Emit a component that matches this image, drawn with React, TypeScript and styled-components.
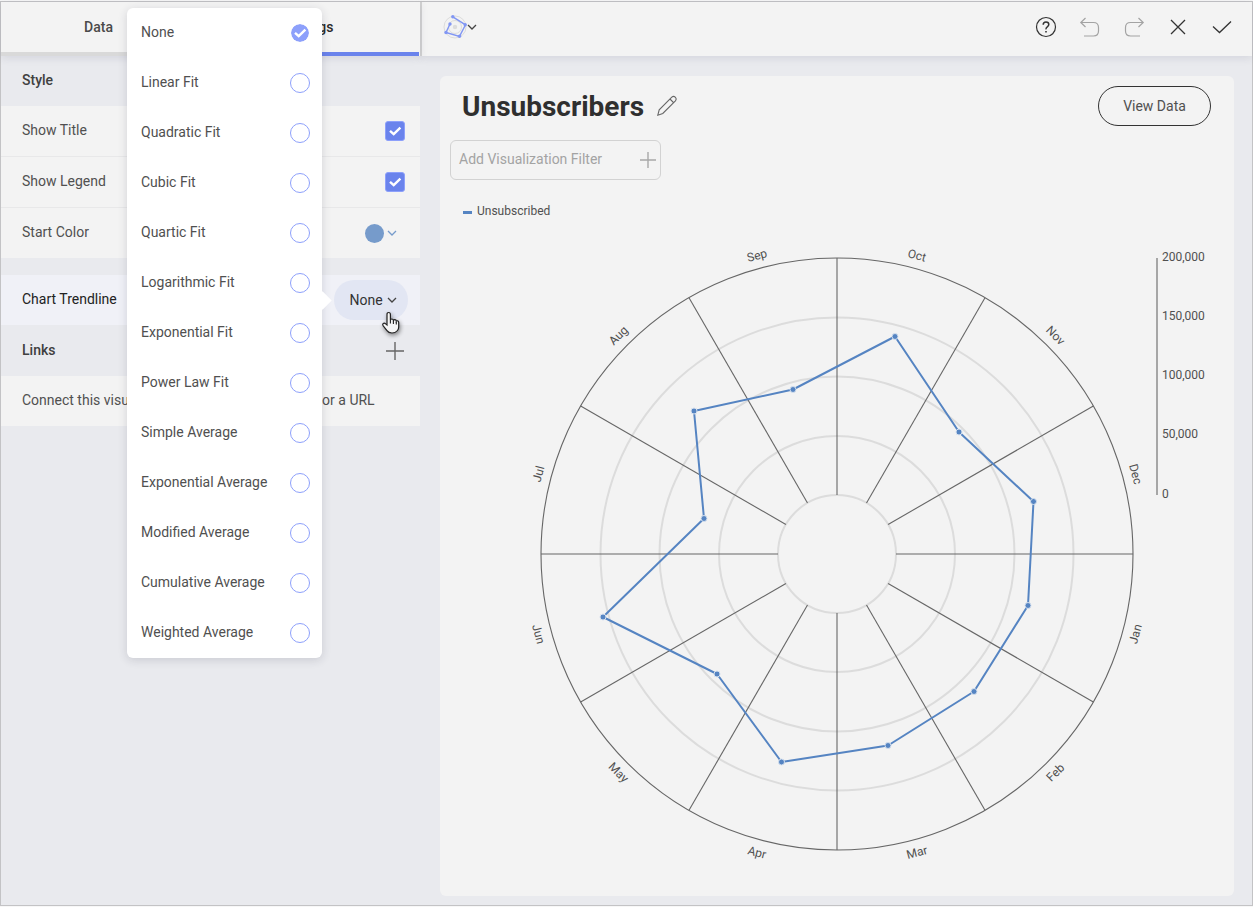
import React, { useState } from "react";
import styled, { createGlobalStyle, css } from "styled-components";

const GlobalStyle = createGlobalStyle`
  *, *::before, *::after { box-sizing: border-box; }
  body {
    margin: 0;
    background: #f7f7f7;
    font-family: Roboto, "Liberation Sans", sans-serif;
    font-size: 14px;
    line-height: 20px;
    color: #505050;
  }
  button, input { font: inherit; color: inherit; }
`;

const Frame = styled.div`
  display: flex;
  min-height: calc(100vh - 2px);
  margin: 1px 0;
  border: 1px solid #c3c3c5;
  background: #e9eaee;
`;

const Sidebar = styled.aside`
  position: relative;
  width: 419px;
  flex: none;
`;

const Tabs = styled.nav`
  display: flex;
  height: 54px;
  padding-right: 1px;
  background: #f3f3f3;
  box-shadow: 0 2px 8px rgba(60, 60, 90, 0.12);
`;

const Tab = styled.button<{ $active?: boolean }>`
  flex: 1;
  padding: 0 14px 0 0;
  border: 0;
  border-bottom: 4px solid ${(p) => (p.$active ? "#6a83ec" : "#d9d9d9")};
  background: #f3f3f3;
  font-weight: 500;
  color: ${(p) => (p.$active ? "#2b2b2b" : "#4a4a4a")};
`;

const SectionHeader = styled.div`
  display: flex;
  align-items: center;
  justify-content: space-between;
  height: 50px;
  padding: 0 16px 0 21px;
`;

const LinksHeader = styled(SectionHeader)`
  height: 51px;
`;

const SectionTitle = styled.h2`
  margin: 0;
  padding-bottom: 2px;
  font-size: 14px;
  font-weight: 500;
  color: #404040;
`;

const Row = styled.div<{ $highlight?: boolean }>`
  display: flex;
  align-items: center;
  justify-content: space-between;
  height: 50px;
  padding: 0 ${(p) => (p.$highlight ? 12 : 15)}px 0 21px;
  background: ${(p) => (p.$highlight ? "#f0f1f7" : "#f3f3f3")};
  color: ${(p) => (p.$highlight ? "#222222" : "#505050")};

  & + & {
    margin-top: 1px;
    box-shadow: 0 -1px 0 #e8e8e9;
  }
`;

const RowText = styled.span`
  padding-bottom: 2px;
`;

const Spacer = styled.div`
  height: 17px;
`;

const iconButton = css`
  display: inline-flex;
  align-items: center;
  justify-content: center;
  padding: 0;
  border: 0;
  background: none;
`;

const IconButton = styled.button`
  ${iconButton}
`;

const CheckHolder = styled.span`
  display: grid;
  width: 20px;
  height: 20px;

  > * { grid-area: 1 / 1; }
  > svg { pointer-events: none; }
`;

const CheckBox = styled.input`
  appearance: none;
  width: 20px;
  height: 20px;
  margin: 0;
  border: 1px solid #8da0fb;
  border-radius: 3px;
  &:checked { background: #6a83ec; }
`;

const ColorButton = styled.button`
  ${iconButton}
  gap: 3px;
  margin-right: 8px;
`;

const Swatch = styled.span`
  width: 19px;
  height: 19px;
  border-radius: 50%;
  background: #769bcb;
`;

const TrendlineButton = styled.button`
  ${iconButton}
  gap: 4px;
  width: 74px;
  height: 40px;
  padding-left: 4px;
  border-radius: 20px;
  background: #e2e6f3;
  color: #333333;
`;

const Popup = styled.div`
  position: absolute;
  top: 6px;
  left: 126px;
  width: 195px;
  border-radius: 6px;
  background: #ffffff;
  box-shadow: 0 2px 10px rgba(40, 40, 60, 0.16);

  &::after {
    content: "";
    position: absolute;
    top: 286px;
    right: -7px;
    width: 13px;
    height: 13px;
    background: #ffffff;
    transform: rotate(45deg);
  }
`;

const Option = styled.label`
  display: flex;
  align-items: center;
  justify-content: space-between;
  height: 50px;
  padding: 0 12px 0 14px;
`;

const Radio = styled.input`
  appearance: none;
  width: 20px;
  height: 20px;
  margin: 0;
  border: 1px solid #8da0fb;
  border-radius: 50%;
  &:checked {
    border-color: #ffffff;
    background: #8da0fb;
    background-clip: padding-box;
  }
`;

const Pointer = styled.svg`
  position: absolute;
  top: 308px;
  left: 378px;
  filter: drop-shadow(1px 2px 2px rgba(0, 0, 0, 0.45));
`;

const Workspace = styled.main`
  display: flex;
  flex: 1;
  flex-direction: column;
  min-width: 0;
`;

const Toolbar = styled.header`
  display: flex;
  align-items: center;
  justify-content: space-between;
  height: 54px;
  padding: 0 19px 4px 21px;
  border-left: 2px solid #d2d2d2;
  background: #f3f3f3;
  box-shadow: 0 2px 8px rgba(60, 60, 90, 0.12);
`;

const ToolGroup = styled.div`
  display: flex;
  align-items: center;
  gap: 22px;
`;

const Card = styled.section`
  display: flex;
  flex: 1;
  flex-direction: column;
  margin: 20px 18px 9px 20px;
  border-radius: 6px;
  background: #f3f3f3;
`;

const CardHeader = styled.div`
  display: flex;
  align-items: center;
  justify-content: space-between;
  padding: 10px 23px 0 22px;
`;

const TitleGroup = styled.div`
  display: flex;
  align-items: center;
  gap: 12px;
`;

const Title = styled.h1`
  margin: 0;
  padding-top: 2px;
  font-size: 28px;
  line-height: 38px;
  font-weight: 700;
  color: #2f2f2f;
`;

const ViewDataButton = styled.button`
  width: 113px;
  height: 40px;
  padding: 0;
  border: 1px solid #333333;
  border-radius: 20px;
  background: none;
`;

const FilterButton = styled.button`
  display: flex;
  align-items: center;
  justify-content: space-between;
  width: 211px;
  height: 40px;
  margin: 14px 0 0 10px;
  padding: 0 4px 0 8px;
  border: 1px solid #d2d2d2;
  border-radius: 6px;
  background: none;
  color: #a3a3a3;
`;

const Legend = styled.div`
  display: flex;
  align-items: center;
  gap: 5px;
  margin: 21px 0 9px 23px;
  font-size: 12px;
`;

const LegendMark = styled.span`
  width: 9px;
  height: 3px;
  margin-top: 2px;
  background: #5584c2;
`;

const Chart = styled.svg`
  display: block;
  width: 100%;
  height: auto;
  font-size: 12px;
  fill: #505050;
`;

const Chevron = ({ color = "#444", size = 10 }: { color?: string; size?: number }) => (
  <svg width={size} height="10" viewBox="0 0 10 10" fill="none" stroke={color} strokeWidth="1.3">
    <path d="M1 3l4 4 4-4" />
  </svg>
);

const Plus = ({ color, size }: { color: string; size: number }) => (
  <svg width={size} height={size} viewBox={`0 0 ${size} ${size}`} stroke={color} strokeWidth="1.4">
    <path d={`M${size / 2} 0V${size}M0 ${size / 2}H${size}`} />
  </svg>
);

const Tick = () => (
  <svg width="20" height="20" viewBox="0 0 20 20" fill="none" stroke="#fff" strokeWidth="2.4">
    <path d="M5 9.8l3.700 3.400L15.400 6.600" />
  </svg>
);

const RadarIcon = () => (
  <svg width="24" height="24" viewBox="0 0 24 24" fill="none">
    <g stroke="#dcdcdc">
      <circle cx="12" cy="12" r="11" />
      <circle cx="12" cy="12" r="6.5" />
    </g>
    <circle cx="12" cy="12" r="2.2" fill="#dcdcdc" />
    <path d="M7 9L3 17.5L16.5 21.3L22.5 9.8L9.8 1.8" stroke="#8196f3" strokeWidth="1.4" />
    <g fill="#8196f3">
      <circle cx="7" cy="9" r="1.7" />
      <circle cx="3" cy="17.5" r="1.7" />
      <circle cx="16.5" cy="21.3" r="1.7" />
      <circle cx="22.200" cy="9.8" r="1.7" />
      <circle cx="9.8" cy="1.8" r="1.7" />
    </g>
  </svg>
);

const Pencil = () => (
  <svg width="22" height="22" viewBox="0 0 22 22" fill="none" stroke="#666" strokeWidth="1.1">
    <path d="M1.8 20.2l1.4-5.4L15.8 2.2q1.8-1.600 3.400 0 1.800 1.800.2 3.600L6.800 18.400z M14 4l3.800 3.800" />
  </svg>
);

const options = [
  "None", "Linear Fit", "Quadratic Fit", "Cubic Fit", "Quartic Fit", "Logarithmic Fit",
  "Exponential Fit", "Power Law Fit", "Simple Average", "Exponential Average",
  "Modified Average", "Cumulative Average", "Weighted Average",
];

const months = ["Oct", "Nov", "Dec", "Jan", "Feb", "Mar", "Apr", "May", "Jun", "Jul", "Aug", "Sep"];

const points: [number, number][] = [
  [895, 336.5], [959, 432], [1033.5, 501.5], [1028, 605.5], [974, 691.5], [888, 745.5],
  [781.5, 762], [717, 674], [603, 617], [704, 518.5], [694, 411], [793, 389.5],
];

const scale = ["200,000", "150,000", "100,000", "50,000", "0"];

const CX = 837;
const CY = 554;

function RadialChart() {
  return (
    <Chart viewBox="440 230 794 666" role="img" aria-label="Unsubscribed by month">
      <g fill="none" stroke="#dcdcdc" strokeWidth="2">
        {[59, 118, 177.5, 236.5].map((r) => (
          <circle key={r} cx={CX} cy={CY} r={r} />
        ))}
      </g>
      <g fill="none" stroke="#666" strokeWidth="1.1">
        {months.map((m, i) => {
          const a = (i * Math.PI) / 6;
          return (
            <line
              key={m}
              x1={CX + 59 * Math.sin(a)}
              y1={CY - 59 * Math.cos(a)}
              x2={CX + 296 * Math.sin(a)}
              y2={CY - 296 * Math.cos(a)}
            />
          );
        })}
        <circle cx={CX} cy={CY} r={296} />
      </g>
      {months.map((m, i) => {
        const deg = 15 + i * 30;
        const a = (deg * Math.PI) / 180;
        const x = CX + 309 * Math.sin(a);
        const y = CY - 309 * Math.cos(a);
        const turn = deg > 90 && deg < 270 ? deg - 180 : deg;
        return (
          <text key={m} x={x} y={y} dy="4" textAnchor="middle" transform={`rotate(${turn} ${x} ${y})`}>
            {m}
          </text>
        );
      })}
      <polygon
        points={points.map((p) => p.join(",")).join(" ")}
        fill="none"
        stroke="#5584c2"
        strokeWidth="2"
        strokeLinejoin="round"
      />
      {points.map(([x, y]) => (
        <circle key={x} cx={x} cy={y} r="3" fill="#5584c2" stroke="#d5e0ee" strokeWidth="1" />
      ))}
      <path d="M1157 258V495" stroke="#a6a6a6" strokeWidth="2" />
      {scale.map((s, i) => (
        <text key={s} x="1162" y={261 + Math.floor(i * 59.25)}>
          {s}
        </text>
      ))}
    </Chart>
  );
}

export default function App() {
  const [trend, setTrend] = useState("None");
  const [shown, setShown] = useState<Record<string, boolean>>({ "Show Title": true, "Show Legend": true });

  return (
    <>
      <GlobalStyle />
      <Frame>
        <Sidebar>
          <Tabs>
            <Tab>Data</Tab>
            <Tab $active>Settings</Tab>
          </Tabs>
          <SectionHeader>
            <SectionTitle>Style</SectionTitle>
          </SectionHeader>
          {Object.keys(shown).map((name) => (
            <Row key={name}>
              <RowText as="label" htmlFor={name}>{name}</RowText>
              <CheckHolder>
                <CheckBox
                  id={name}
                  type="checkbox"
                  checked={shown[name]}
                  onChange={(e) => setShown({ ...shown, [name]: e.target.checked })}
                />
                <Tick />
              </CheckHolder>
            </Row>
          ))}
          <Row>
            <RowText>Start Color</RowText>
            <ColorButton aria-label="Start Color">
              <Swatch />
              <Chevron color="#769bcb" />
            </ColorButton>
          </Row>
          <Spacer />
          <Row $highlight>
            <RowText>Chart Trendline</RowText>
            <TrendlineButton>
              {trend}
              <Chevron />
            </TrendlineButton>
          </Row>
          <LinksHeader>
            <SectionTitle>Links</SectionTitle>
            <IconButton aria-label="Add link">
              <Plus color="#666" size={18} />
            </IconButton>
          </LinksHeader>
          <Row>
            <RowText>Connect this visualization to another dashboard or a URL</RowText>
          </Row>
          <Popup role="radiogroup" aria-label="Chart Trendline">
            {options.map((o) => (
              <Option key={o}>
                <RowText>{o}</RowText>
                <CheckHolder>
                  <Radio type="radio" name="trendline" checked={trend === o} onChange={() => setTrend(o)} />
                  {trend === o && <Tick />}
                </CheckHolder>
              </Option>
            ))}
          </Popup>
          <Pointer width="24" height="28" viewBox="0 0 24 28">
            <path
              d="M8 15V4.5q0-2 1.7-2t1.7 2V10q.3-1 1.5-1t1.5 1.500q.4-.9 1.500-.8 1.300.1 1.400 1.500.4-.6 1.300-.4 1.100.3 1.100 1.700v4.500q0 2-1.200 3.500-2 2.500-5.500 2.500-3.500 0-5-2.300L4.200 16q-1.100-1.600 0-2.500 1.200-.8 2.500.4z"
              fill="#f6f6f6"
              stroke="#222"
              strokeWidth="1.2"
            />
            <path d="M11.400 10v3.500M14.400 11v3M17.300 12v2.500" stroke="#222" strokeWidth="1.1" />
          </Pointer>
        </Sidebar>
        <Workspace>
          <Toolbar>
            <IconButton aria-label="Visualization type">
              <RadarIcon />
              <Chevron />
            </IconButton>
            <ToolGroup>
              <IconButton aria-label="Help">
                <svg width="22" height="22" viewBox="0 0 22 22" fill="none" stroke="#333" strokeWidth="1.2">
                  <circle cx="11" cy="11" r="9.500" />
                  <path d="M8.200 8.800q0-2.800 2.800-2.800t2.800 2.500q0 1.300-1.500 2.300T11 13.300" strokeWidth="1.500" />
                  <path d="M11 15v1.600" strokeWidth="1.600" />
                </svg>
              </IconButton>
              <IconButton aria-label="Undo">
                <svg width="22" height="22" viewBox="0 0 22 22" fill="none" stroke="#a3a3a3" strokeWidth="1.200">
                  <path d="M6.500 2L1.800 6.500l4.700 4.500M2 6.500h12.500q5 0 5 5v3.500q0 5-5 5H5" />
                </svg>
              </IconButton>
              <IconButton aria-label="Redo">
                <svg width="22" height="22" viewBox="0 0 22 22" fill="none" stroke="#a3a3a3" strokeWidth="1.200">
                  <path d="M15.500 2l4.700 4.500-4.700 4.500M20 6.500H7.500q-5 0-5 5v3.500q0 5 5 5H17" />
                </svg>
              </IconButton>
              <IconButton aria-label="Close">
                <svg width="22" height="22" viewBox="0 0 22 22" fill="none" stroke="#333" strokeWidth="1.300">
                  <path d="M4 4l14 14M18 4L4 18" />
                </svg>
              </IconButton>
              <IconButton aria-label="Apply">
                <svg width="22" height="22" viewBox="0 0 22 22" fill="none" stroke="#333" strokeWidth="1.300">
                  <path d="M2 10.500l6.500 6L20 5.500" />
                </svg>
              </IconButton>
            </ToolGroup>
          </Toolbar>
          <Card>
            <CardHeader>
              <TitleGroup>
                <Title>Unsubscribers</Title>
                <IconButton aria-label="Edit title">
                  <Pencil />
                </IconButton>
              </TitleGroup>
              <ViewDataButton>View Data</ViewDataButton>
            </CardHeader>
            <FilterButton>
              <RowText>Add Visualization Filter</RowText>
              <Plus color="#a8a8a8" size={16} />
            </FilterButton>
            <Legend>
              <LegendMark />
              Unsubscribed
            </Legend>
            <RadialChart />
          </Card>
        </Workspace>
      </Frame>
    </>
  );
}
